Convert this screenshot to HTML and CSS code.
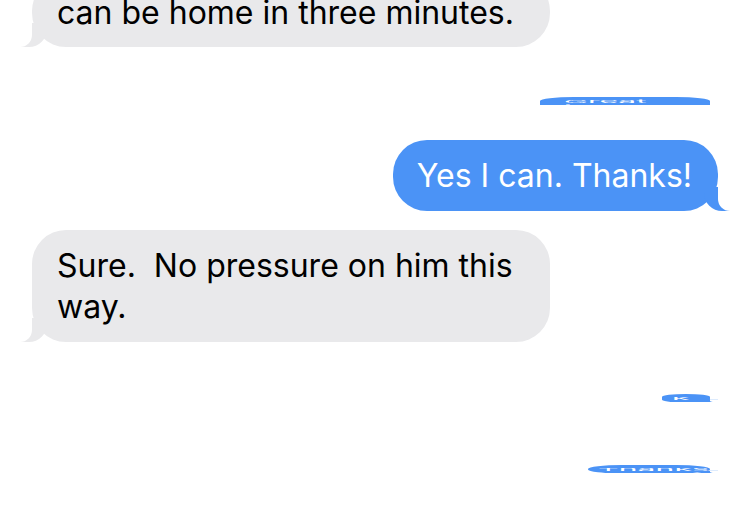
FILE: index.html
```html
<!DOCTYPE html>
<html lang="en">
<head>
    <meta charset="UTF-8">
    <meta name="viewport" content="width=device-width, initial-scale=1.0">
    <title>Messages</title>
    <link rel="stylesheet" href="styles.css">
</head>
<body>
    <div class="thread">
        <div class="row them first">
            <div class="bubble gray">can be home in three minutes.</div>
        </div>

        <div class="row me sliver s1">
            <div class="squash"><div class="bubble blue">Great idea!</div></div>
        </div>

        <div class="row me msg2">
            <div class="bubble blue">Yes I can. Thanks!</div>
        </div>

        <div class="row them msg3">
            <div class="bubble gray">Sure.&nbsp; No pressure on him this way.</div>
        </div>

        <div class="row me sliver s2">
            <div class="squash"><div class="bubble blue">k</div></div>
        </div>

        <div class="row me sliver s3">
            <div class="squash"><div class="bubble blue">Thanks!</div></div>
        </div>
    </div>
</body>
</html>
```

FILE: styles.css
```css
body {
    margin: 0;
    padding: 0;
    background: #fff;
    font-family: Inter, "Noto Sans", sans-serif;
    overflow: hidden;
}

.thread {
    display: flex;
    flex-direction: column;
    padding: 0 31px 0 32px;
    margin-top: -23px;
}

.row {
    display: flex;
}

.row.them {
    justify-content: flex-start;
}

.row.me {
    justify-content: flex-end;
}

.bubble {
    position: relative;
    max-width: 518px;
    box-sizing: border-box;
    padding: 15px 25px;
    border-radius: 34px;
    font-size: 32px;
    line-height: 41px;
    letter-spacing: 0;
}

.first .bubble {
    width: 518px;
    padding-bottom: 14px;
}

.gray {
    background: #e9e9eb;
    color: #000;
}

.blue {
    background: #4b93f6;
    color: #fff;
    padding-right: 26px;
    padding-left: 24px;
}

/* tails */
.bubble::before,
.bubble::after {
    content: "";
    position: absolute;
    bottom: 0;
    height: 24px;
}

.gray::before {
    left: -11px;
    width: 26px;
    background: #e9e9eb;
    border-bottom-right-radius: 18px;
}

.gray::after {
    left: -26px;
    width: 26px;
    background: #fff;
    border-bottom-right-radius: 12px;
}

.blue::before {
    right: -12px;
    width: 26px;
    background: #4b93f6;
    border-bottom-left-radius: 18px;
}

.blue::after {
    right: -26px;
    width: 26px;
    background: #fff;
    border-bottom-left-radius: 12px;
}

/* squashed previews at the right edge */
.sliver {
    height: 8px;
    overflow: hidden;
    padding-right: 8px;
}

.squash {
    transform: scaleY(0.12);
    transform-origin: top right;
}

.s1 {
    margin-top: 50px;
}

.s1 .bubble {
    width: 170px;
}

.msg2 {
    margin-top: 35px;
}

.msg3 {
    margin-top: 19px;
}

.s2 {
    margin-top: 52px;
}

.s2 .bubble {
    width: 48px;
    padding: 15px 10px;
}

.s3 {
    margin-top: 63px;
}

.s3 .bubble {
    width: 122px;
    padding: 15px 10px;
}
```
